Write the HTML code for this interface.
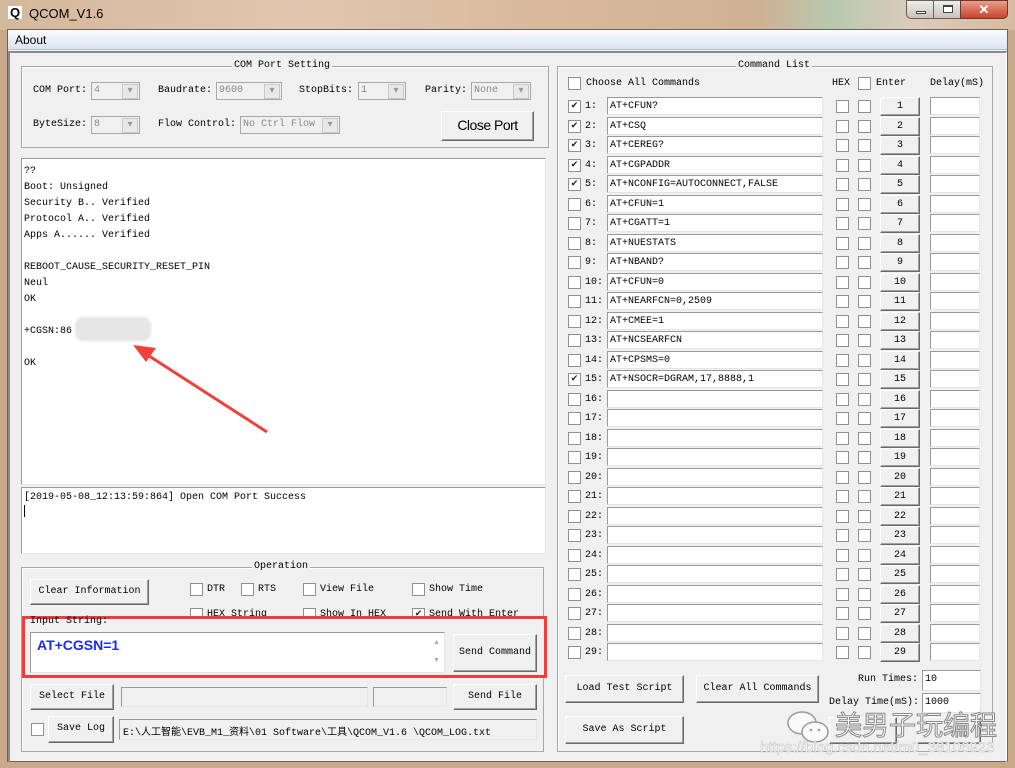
<!DOCTYPE html>
<html><head><meta charset="utf-8"><style>
*{box-sizing:border-box;margin:0;padding:0}
body{width:1015px;height:768px;position:relative;overflow:hidden;background:#c9a98a;font:10px "Liberation Mono","Noto Sans CJK SC",monospace;color:#000}
.a{position:absolute;white-space:nowrap}
.cb{position:absolute;width:13px;height:13px;border:1px solid #8e8f8f;background:#fff;font:9px "DejaVu Sans",sans-serif;line-height:11px;text-align:center;color:#222}
.fld{position:absolute;background:#fff;border:1px solid;border-color:#9a9a9a #e6e6e6 #e6e6e6 #9a9a9a;padding:1px 2px;white-space:nowrap;overflow:hidden}
.dis{background:#f0f0f0}
.btn{position:absolute;background:#f0f0f0;border:1px solid;border-color:#fff #696969 #696969 #fff;box-shadow:inset -1px -1px 0 #a0a0a0;text-align:center;white-space:nowrap}
.grp{position:absolute;border:1px solid #a8a8a8;box-shadow:inset 1px 1px 0 #fff}
.gt{position:absolute;background:#f0f0f0;padding:0 2px;top:-7px}
.cmb{position:absolute;border:1px solid #a8a8a8;background:#f0f0f0;color:#8a8a8a;padding:2px 2px}
.cmb:after{content:"▾";position:absolute;right:1px;top:1px;width:14px;height:13px;border:1px solid #c8c8c8;background:#e8e8e8;color:#999;text-align:center;font:10px sans-serif;line-height:12px}
.r{position:absolute;left:557px;width:430px;height:19px}
.r .cb{left:11px;top:3px}
.r .n{position:absolute;left:28px;top:4px}
.r .fld{left:50px;top:0;width:216px;height:18px;padding:2px 2px;line-height:13px}
.r .h{left:279px}.r .e{left:301px}
.r .b{position:absolute;left:323px;top:0;width:40px;height:19px;line-height:17px}
.r .d{left:373px;width:50px}
</style></head><body>
<div class="a" style="left:0;top:0;width:1015px;height:30px;background:linear-gradient(90deg,#d4b89c 0%,#e0c7ae 30%,#d9b89b 55%,#cfb294 75%,#b7c9b0 82%,#dccbbc 90%,#d6bba0 100%)"></div>
<div class="a" style="left:8px;top:6px;width:14px;height:13px;background:#fff;font:bold 13px 'Liberation Sans',sans-serif;color:#000;line-height:13px;text-align:center">Q</div>
<div class="a" style="left:29px;top:6px;font:13px 'Liberation Sans',sans-serif;color:#000">QCOM_V1.6</div>
<div class="a" style="left:906px;top:0;width:28px;height:19px;border:1px solid #6b5e52;border-radius:0 0 0 5px;background:linear-gradient(#eee,#c9c1b8)"><div class="a" style="left:9px;top:10px;width:10px;height:3px;background:#fff;border:1px solid #444"></div></div>
<div class="a" style="left:933px;top:0;width:28px;height:19px;border:1px solid #6b5e52;background:linear-gradient(#eee,#c9c1b8)"><div class="a" style="left:9px;top:4px;width:10px;height:8px;border:1px solid #444;border-top-width:2px;background:#fff"></div></div>
<div class="a" style="left:960px;top:0;width:48px;height:19px;border:1px solid #6b3a2e;border-radius:0 0 5px 0;background:linear-gradient(#e8a08c,#c8432c);color:#fff;font:bold 13px 'Liberation Sans',sans-serif;text-align:center;line-height:17px">✕</div>
<div class="a" style="left:7px;top:29px;width:1001px;height:733px;background:#f0f0f0;border:1px solid #6f6358"></div>
<div class="a" style="left:8px;top:30px;width:999px;height:20px;background:linear-gradient(#fbfcfe,#dbe3f1);border-bottom:1px solid #b8c3d6"></div>
<div class="a" style="left:15px;top:33px;font:12px 'Liberation Sans',sans-serif">About</div>
<div class="a" style="left:8px;top:51px;width:999px;height:711px;border-top:2px solid #8a8a8a;border-left:2px solid #8a8a8a;border-right:1px solid #fff"></div>

<div class="grp" style="left:21px;top:66px;width:528px;height:82px"><span class="gt" style="left:210px">COM Port Setting</span></div>
<div class="a" style="left:33px;top:85px">COM Port:</div><div class="cmb" style="left:91px;top:82px;width:49px;height:18px">4</div>
<div class="a" style="left:158px;top:85px">Baudrate:</div><div class="cmb" style="left:216px;top:82px;width:66px;height:18px">9600</div>
<div class="a" style="left:299px;top:85px">StopBits:</div><div class="cmb" style="left:358px;top:82px;width:48px;height:18px">1</div>
<div class="a" style="left:425px;top:85px">Parity:</div><div class="cmb" style="left:471px;top:82px;width:60px;height:18px">None</div>
<div class="a" style="left:33px;top:119px">ByteSize:</div><div class="cmb" style="left:91px;top:116px;width:49px;height:18px">8</div>
<div class="a" style="left:158px;top:119px">Flow Control:</div><div class="cmb" style="left:240px;top:116px;width:100px;height:18px">No Ctrl Flow</div>
<div class="btn" style="left:441px;top:111px;width:93px;height:30px;font:14px 'Liberation Sans',sans-serif;line-height:27px;letter-spacing:-0.5px">Close Port</div>

<div class="fld" style="left:21px;top:158px;width:525px;height:327px;padding:5px 2px;line-height:16px">??<br>Boot: Unsigned<br>Security B.. Verified<br>Protocol A.. Verified<br>Apps A...... Verified<br><br>REBOOT_CAUSE_SECURITY_RESET_PIN<br>Neul<br>OK<br><br>+CGSN:86<br><br>OK</div>
<div class="a" style="left:75px;top:317px;width:76px;height:24px;background:#e6e6e6;border-radius:8px;filter:blur(1px)"></div>
<svg class="a" style="left:0;top:0" width="560" height="560"><line x1="267" y1="432" x2="146" y2="354" stroke="#f0403a" stroke-width="3"/><polygon points="133,345 156,348 146,362" fill="#f0403a"/></svg>
<div class="fld" style="left:21px;top:487px;width:525px;height:67px;padding:4px 2px">[2019-05-08_12:13:59:864] Open COM Port Success<br><span style="display:inline-block;width:1px;height:12px;background:#000;margin-top:2px"></span></div>

<div class="grp" style="left:21px;top:567px;width:523px;height:185px"><span class="gt" style="left:230px">Operation</span></div>
<div class="btn" style="left:30px;top:579px;width:119px;height:26px;line-height:23px">Clear Information</div>
<div class="cb" style="left:190px;top:583px"></div><div class="a" style="left:207px;top:584px">DTR</div>
<div class="cb" style="left:241px;top:583px"></div><div class="a" style="left:258px;top:584px">RTS</div>
<div class="cb" style="left:303px;top:583px"></div><div class="a" style="left:320px;top:584px">View File</div>
<div class="cb" style="left:412px;top:583px"></div><div class="a" style="left:429px;top:584px">Show Time</div>
<div class="cb" style="left:190px;top:608px"></div><div class="a" style="left:207px;top:609px">HEX String</div>
<div class="cb" style="left:303px;top:608px"></div><div class="a" style="left:320px;top:609px">Show In HEX</div>
<div class="cb" style="left:412px;top:608px">✔</div><div class="a" style="left:429px;top:609px">Send With Enter</div>
<div class="a" style="left:22px;top:616px;width:525px;height:62px;border:3px solid #f03c3c;background:#f0f0f0"></div>
<div class="a" style="left:30px;top:616px">Input String:</div>
<div class="fld" style="left:30px;top:632px;width:415px;height:41px;padding:4px 6px;font:bold 14px 'Liberation Sans',sans-serif;color:#1a2cf0">AT+CGSN=1</div>
<div class="a" style="left:430px;top:634px;width:13px;height:37px;color:#aaa;font:7px sans-serif;text-align:center;line-height:18px">▲<br>▼</div>
<div class="btn" style="left:453px;top:634px;width:84px;height:38px;line-height:35px">Send Command</div>
<div class="btn" style="left:30px;top:684px;width:84px;height:26px;line-height:23px">Select File</div>
<div class="fld dis" style="left:121px;top:687px;width:247px;height:20px"></div>
<div class="fld dis" style="left:373px;top:687px;width:74px;height:20px"></div>
<div class="btn" style="left:453px;top:684px;width:84px;height:26px;line-height:23px">Send File</div>
<div class="cb" style="left:31px;top:723px"></div>
<div class="btn" style="left:48px;top:716px;width:66px;height:27px;line-height:24px">Save Log</div>
<div class="fld dis" style="left:119px;top:719px;width:418px;height:21px;padding:3px 3px">E:\人工智能\EVB_M1_资料\01 Software\工具\QCOM_V1.6 \QCOM_LOG.txt</div>

<div class="grp" style="left:557px;top:66px;width:436px;height:686px"><span class="gt" style="left:178px">Command List</span></div>
<div class="cb" style="left:568px;top:77px"></div><div class="a" style="left:586px;top:78px">Choose All Commands</div>
<div class="a" style="left:832px;top:78px">HEX</div><div class="cb" style="left:858px;top:77px"></div><div class="a" style="left:876px;top:78px">Enter</div><div class="a" style="left:930px;top:78px">Delay(mS)</div>

<div class="r" style="top:97px"><div class="cb">✔</div><span class="n">1:</span><div class="fld">AT+CFUN?</div><div class="cb h"></div><div class="cb e"></div><div class="btn b">1</div><div class="fld d"></div></div>
<div class="r" style="top:116.5px"><div class="cb">✔</div><span class="n">2:</span><div class="fld">AT+CSQ</div><div class="cb h"></div><div class="cb e"></div><div class="btn b">2</div><div class="fld d"></div></div>
<div class="r" style="top:136px"><div class="cb">✔</div><span class="n">3:</span><div class="fld">AT+CEREG?</div><div class="cb h"></div><div class="cb e"></div><div class="btn b">3</div><div class="fld d"></div></div>
<div class="r" style="top:155.5px"><div class="cb">✔</div><span class="n">4:</span><div class="fld">AT+CGPADDR</div><div class="cb h"></div><div class="cb e"></div><div class="btn b">4</div><div class="fld d"></div></div>
<div class="r" style="top:175px"><div class="cb">✔</div><span class="n">5:</span><div class="fld">AT+NCONFIG=AUTOCONNECT,FALSE</div><div class="cb h"></div><div class="cb e"></div><div class="btn b">5</div><div class="fld d"></div></div>
<div class="r" style="top:194.5px"><div class="cb"></div><span class="n">6:</span><div class="fld">AT+CFUN=1</div><div class="cb h"></div><div class="cb e"></div><div class="btn b">6</div><div class="fld d"></div></div>
<div class="r" style="top:214px"><div class="cb"></div><span class="n">7:</span><div class="fld">AT+CGATT=1</div><div class="cb h"></div><div class="cb e"></div><div class="btn b">7</div><div class="fld d"></div></div>
<div class="r" style="top:233.5px"><div class="cb"></div><span class="n">8:</span><div class="fld">AT+NUESTATS</div><div class="cb h"></div><div class="cb e"></div><div class="btn b">8</div><div class="fld d"></div></div>
<div class="r" style="top:253px"><div class="cb"></div><span class="n">9:</span><div class="fld">AT+NBAND?</div><div class="cb h"></div><div class="cb e"></div><div class="btn b">9</div><div class="fld d"></div></div>
<div class="r" style="top:272.5px"><div class="cb"></div><span class="n">10:</span><div class="fld">AT+CFUN=0</div><div class="cb h"></div><div class="cb e"></div><div class="btn b">10</div><div class="fld d"></div></div>
<div class="r" style="top:292px"><div class="cb"></div><span class="n">11:</span><div class="fld">AT+NEARFCN=0,2509</div><div class="cb h"></div><div class="cb e"></div><div class="btn b">11</div><div class="fld d"></div></div>
<div class="r" style="top:311.5px"><div class="cb"></div><span class="n">12:</span><div class="fld">AT+CMEE=1</div><div class="cb h"></div><div class="cb e"></div><div class="btn b">12</div><div class="fld d"></div></div>
<div class="r" style="top:331px"><div class="cb"></div><span class="n">13:</span><div class="fld">AT+NCSEARFCN</div><div class="cb h"></div><div class="cb e"></div><div class="btn b">13</div><div class="fld d"></div></div>
<div class="r" style="top:350.5px"><div class="cb"></div><span class="n">14:</span><div class="fld">AT+CPSMS=0</div><div class="cb h"></div><div class="cb e"></div><div class="btn b">14</div><div class="fld d"></div></div>
<div class="r" style="top:370px"><div class="cb">✔</div><span class="n">15:</span><div class="fld">AT+NSOCR=DGRAM,17,8888,1</div><div class="cb h"></div><div class="cb e"></div><div class="btn b">15</div><div class="fld d"></div></div>
<div class="r" style="top:389.5px"><div class="cb"></div><span class="n">16:</span><div class="fld"></div><div class="cb h"></div><div class="cb e"></div><div class="btn b">16</div><div class="fld d"></div></div>
<div class="r" style="top:409px"><div class="cb"></div><span class="n">17:</span><div class="fld"></div><div class="cb h"></div><div class="cb e"></div><div class="btn b">17</div><div class="fld d"></div></div>
<div class="r" style="top:428.5px"><div class="cb"></div><span class="n">18:</span><div class="fld"></div><div class="cb h"></div><div class="cb e"></div><div class="btn b">18</div><div class="fld d"></div></div>
<div class="r" style="top:448px"><div class="cb"></div><span class="n">19:</span><div class="fld"></div><div class="cb h"></div><div class="cb e"></div><div class="btn b">19</div><div class="fld d"></div></div>
<div class="r" style="top:467.5px"><div class="cb"></div><span class="n">20:</span><div class="fld"></div><div class="cb h"></div><div class="cb e"></div><div class="btn b">20</div><div class="fld d"></div></div>
<div class="r" style="top:487px"><div class="cb"></div><span class="n">21:</span><div class="fld"></div><div class="cb h"></div><div class="cb e"></div><div class="btn b">21</div><div class="fld d"></div></div>
<div class="r" style="top:506.5px"><div class="cb"></div><span class="n">22:</span><div class="fld"></div><div class="cb h"></div><div class="cb e"></div><div class="btn b">22</div><div class="fld d"></div></div>
<div class="r" style="top:526px"><div class="cb"></div><span class="n">23:</span><div class="fld"></div><div class="cb h"></div><div class="cb e"></div><div class="btn b">23</div><div class="fld d"></div></div>
<div class="r" style="top:545.5px"><div class="cb"></div><span class="n">24:</span><div class="fld"></div><div class="cb h"></div><div class="cb e"></div><div class="btn b">24</div><div class="fld d"></div></div>
<div class="r" style="top:565px"><div class="cb"></div><span class="n">25:</span><div class="fld"></div><div class="cb h"></div><div class="cb e"></div><div class="btn b">25</div><div class="fld d"></div></div>
<div class="r" style="top:584.5px"><div class="cb"></div><span class="n">26:</span><div class="fld"></div><div class="cb h"></div><div class="cb e"></div><div class="btn b">26</div><div class="fld d"></div></div>
<div class="r" style="top:604px"><div class="cb"></div><span class="n">27:</span><div class="fld"></div><div class="cb h"></div><div class="cb e"></div><div class="btn b">27</div><div class="fld d"></div></div>
<div class="r" style="top:623.5px"><div class="cb"></div><span class="n">28:</span><div class="fld"></div><div class="cb h"></div><div class="cb e"></div><div class="btn b">28</div><div class="fld d"></div></div>
<div class="r" style="top:643px"><div class="cb"></div><span class="n">29:</span><div class="fld"></div><div class="cb h"></div><div class="cb e"></div><div class="btn b">29</div><div class="fld d"></div></div>

<div class="btn" style="left:565px;top:675px;width:119px;height:28px;line-height:25px">Load Test Script</div>
<div class="btn" style="left:696px;top:675px;width:123px;height:28px;line-height:25px">Clear All Commands</div>
<div class="btn" style="left:565px;top:716px;width:119px;height:28px;line-height:25px">Save As Script</div>
<div class="a" style="left:858px;top:674px">Run Times:</div><div class="fld" style="left:922px;top:670px;width:59px;height:21px;padding:3px 2px">10</div>
<div class="a" style="left:829px;top:697px">Delay Time(mS):</div><div class="fld" style="left:922px;top:693px;width:59px;height:20px;padding:3px 2px">1000</div>
<div class="btn" style="left:829px;top:717px;width:68px;height:27px"></div>
<div class="btn" style="left:917px;top:717px;width:64px;height:27px"></div>
<svg class="a" style="left:785px;top:708px" width="50" height="38"><ellipse cx="17" cy="15" rx="14" ry="11" fill="#fafafa" stroke="#999" stroke-width="1.5"/><ellipse cx="30" cy="24" rx="13" ry="10" fill="#fafafa" stroke="#999" stroke-width="1.5"/><circle cx="26" cy="22" r="1.3" fill="#999"/><circle cx="34" cy="22" r="1.3" fill="#999"/></svg>
<div class="a" style="left:835px;top:707px;font:27px 'Noto Sans CJK SC',sans-serif;color:#fff;-webkit-text-stroke:1px #8a8a8a;line-height:34px">美男子玩编程</div>
<div class="a" style="left:760px;top:739px;font:15px 'Liberation Sans',sans-serif;color:#fff;-webkit-text-stroke:0.6px #c8c8c8">https://blog.csdn.net/m0_38106923</div>
</body></html>
